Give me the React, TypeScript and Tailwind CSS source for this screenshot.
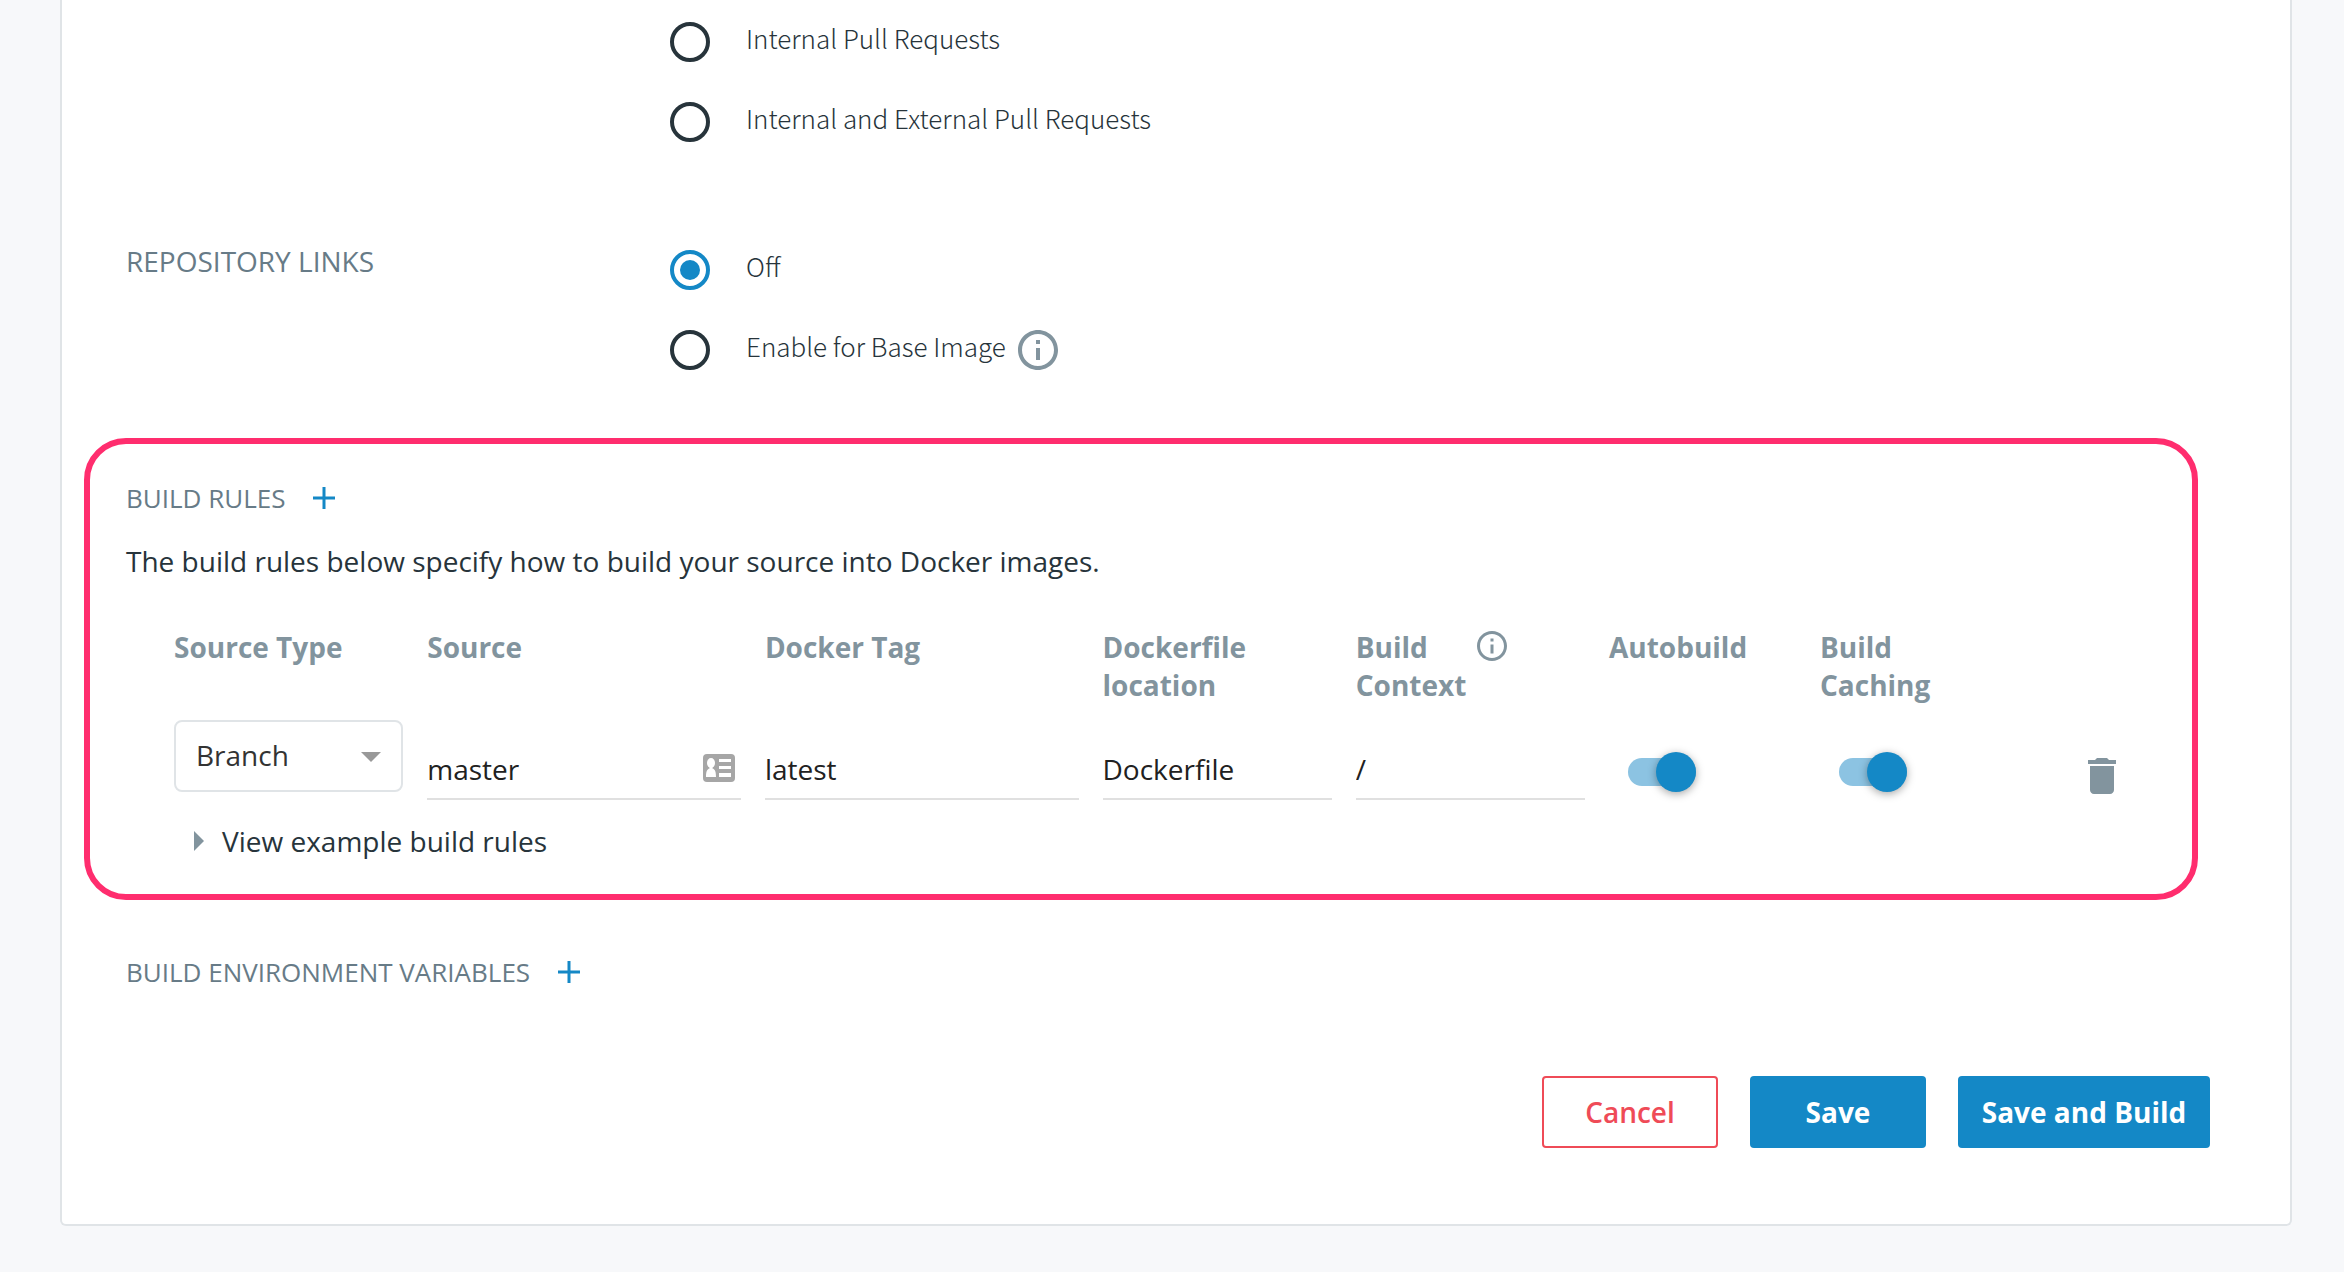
import { useState } from "react";
import type { InputHTMLAttributes, ReactNode } from "react";

const ROW =
  "grid grid-cols-[24fr_32fr_32fr_24fr_24fr_20fr_20fr_9fr] text-left";

function InfoIcon({ className }: { className: string }) {
  return (
    <svg viewBox="0 0 24 24" className={className} fill="currentColor" aria-hidden="true">
      <path d="M11 17h2v-6h-2v6zm1-15C6.480 2 2 6.480 2 12s4.480 10 10 10 10-4.480 10-10S17.520 2 12 2zm0 18c-4.410 0-8-3.590-8-8s3.590-8 8-8 8 3.590 8 8-3.590 8-8 8zM11 9h2V7h-2v2z" />
    </svg>
  );
}

function PlusButton({ label }: { label: string }) {
  return (
    <button type="button" aria-label={label} className="text-[#1488c6]">
      <svg viewBox="0 0 22 22" className="size-[22px]" stroke="currentColor" strokeWidth="3" aria-hidden="true">
        <path d="M11 0v22M0 11h22" />
      </svg>
    </button>
  );
}

function RadioOption({
  name,
  label,
  checked,
  onSelect,
  children,
}: {
  name: string;
  label: string;
  checked: boolean;
  onSelect: () => void;
  children?: ReactNode;
}) {
  return (
    <div className="flex h-10 items-center">
      <label className="flex items-center">
        <input
          type="radio"
          name={name}
          checked={checked}
          onChange={onSelect}
          className="grid size-10 shrink-0 appearance-none place-items-center rounded-full border-4 border-[#27343b] before:size-5 before:rounded-full checked:border-[#1488c6] checked:before:bg-[#1488c6]"
        />
        <span className="pb-2 pl-9 font-['Noto_Sans_CJK_SC','Open_Sans',sans-serif] text-[26px] leading-9 font-light text-[#27343b]">
          {label}
        </span>
      </label>
      {children}
    </div>
  );
}

function TextField(props: InputHTMLAttributes<HTMLInputElement>) {
  return (
    <input
      type="text"
      {...props}
      className="h-[60px] w-full border-b-2 border-[#e0e0e0] bg-transparent text-[28px] text-[#212121] outline-none"
    />
  );
}

function Toggle({ label }: { label: string }) {
  const [on, setOn] = useState(true);
  return (
    <label className="relative mt-8 ml-[19px] flex h-10 w-[68px] items-center">
      <input
        type="checkbox"
        role="switch"
        aria-label={label}
        checked={on}
        onChange={() => setOn(!on)}
        className="peer h-7 w-full appearance-none rounded-full bg-[#bdc5ca] checked:bg-[#8cc3e2]"
      />
      <span className="pointer-events-none absolute left-0 size-10 rounded-full bg-[#f7f8fa] shadow-[0_2px_8px_rgba(0,0,0,0.35)] peer-checked:right-0 peer-checked:left-auto peer-checked:bg-[#1488c6]" />
    </label>
  );
}

export default function App() {
  const [pull, setPull] = useState("");
  const [link, setLink] = useState("Off");

  return (
    <div className="min-h-screen bg-[#f7f8fa] px-[60px] pb-[46px] font-['Open_Sans',sans-serif] text-[28px] leading-[38px] text-[#27343b] md:pr-[52px]">
      <main className="rounded-b-md border-2 border-t-0 border-[#e0e4e7] bg-white pb-[76px]">
        <div role="radiogroup" aria-label="Autotest" className="flex flex-col gap-10 pt-[22px] pl-[608px]">
          {["Internal Pull Requests", "Internal and External Pull Requests"].map((option) => (
            <RadioOption
              key={option}
              name="autotest"
              label={option}
              checked={pull === option}
              onSelect={() => setPull(option)}
            />
          ))}
        </div>

        <section className="flex pt-[108px] pl-16">
          <h2 id="links" className="w-[544px] shrink-0 leading-[22px] text-[#677b87]">
            REPOSITORY LINKS
          </h2>
          <div role="radiogroup" aria-labelledby="links" className="flex flex-col gap-10">
            <RadioOption name="links" label="Off" checked={link === "Off"} onSelect={() => setLink("Off")} />
            <RadioOption
              name="links"
              label="Enable for Base Image"
              checked={link === "Base"}
              onSelect={() => setLink("Base")}
            >
              <button type="button" aria-label="About base image links" className="ml-2 text-[#82949e]">
                <InfoIcon className="size-12" />
              </button>
            </RadioOption>
          </div>
        </section>

        <section className="mt-[68px] mr-[92px] ml-[22px] rounded-[42px] border-6 border-[#ff2d6e] pt-9 pr-[66px] pb-[34px] pl-9">
          <div className="flex items-center gap-7">
            <h2 className="text-[26px] leading-9 text-[#677b87]">BUILD RULES</h2>
            <PlusButton label="Add build rule" />
          </div>
          <p className="mt-[26px]">The build rules below specify how to build your source into Docker images.</p>

          <table className="mt-12 ml-12 block">
            <thead className="block">
              <tr className={`${ROW} text-[#82949e]`}>
                <th scope="col">Source Type</th>
                <th scope="col">Source</th>
                <th scope="col">Docker Tag</th>
                <th scope="col" className="pr-20">Dockerfile location</th>
                <th scope="col" className="flex items-start">
                  <span className="w-[118px]">Build Context</span>
                  <button type="button" aria-label="About build context">
                    <InfoIcon className="size-9" />
                  </button>
                </th>
                <th scope="col">Autobuild</th>
                <th scope="col" className="pr-20">Build Caching</th>
                <td />
              </tr>
            </thead>
            <tbody className="block">
              <tr className={ROW}>
                <td className="relative pt-4 pr-6">
                  <select
                    aria-label="Source Type"
                    className="h-[72px] w-full appearance-none rounded-lg border-2 border-[#e0e4e7] bg-white pb-0.5 pl-5 text-[28px] text-[#333]"
                  >
                    <option>Branch</option>
                    <option>Tag</option>
                  </select>
                  <svg viewBox="0 0 20 10" className="pointer-events-none absolute top-12 right-[46px] h-[10px] w-5 fill-[#999]" aria-hidden="true">
                    <path d="M0 0h20L10 10z" />
                  </svg>
                </td>
                <td className="relative pt-9 pr-6">
                  <TextField aria-label="Source" defaultValue="master" />
                  <svg viewBox="0 0 32 28" className="absolute top-[50px] right-[30px] h-7 w-8" aria-hidden="true">
                    <rect width="32" height="28" rx="4" fill="#a6a6a6" />
                    <g fill="#fff">
                      <ellipse cx="8" cy="9" rx="4" ry="5" />
                      <path d="M6.500 12h3v2.500c2.500.8 3.500 3 3.500 8.500H3c0-5.500 1-7.700 3.500-8.500z" />
                      <path d="M16 5h12v3H16zM16 12h12v3H16zM16 19h12v4H16z" />
                    </g>
                  </svg>
                </td>
                <td className="pt-9 pr-6">
                  <TextField aria-label="Docker Tag" defaultValue="latest" />
                </td>
                <td className="pt-9 pr-6">
                  <TextField aria-label="Dockerfile location" defaultValue="Dockerfile" />
                </td>
                <td className="pt-9 pr-6">
                  <TextField aria-label="Build Context" defaultValue="/" />
                </td>
                <td className="pt-4">
                  <Toggle label="Autobuild" />
                </td>
                <td className="pt-4">
                  <Toggle label="Build Caching" />
                </td>
                <td className="flex justify-end pt-12">
                  <button type="button" aria-label="Delete build rule" className="size-12 text-[#82949e]">
                    <svg viewBox="0 0 24 24" className="size-12" fill="currentColor" aria-hidden="true">
                      <path d="M6 19c0 1.100.9 2 2 2h8c1.100 0 2-.9 2-2V7H6v12zM19 4h-3.500l-1-1h-5l-1 1H5v2h14V4z" />
                    </svg>
                  </button>
                </td>
              </tr>
            </tbody>
          </table>

          <button type="button" className="mt-[22px] ml-[68px] flex items-center gap-[18px]">
            <svg viewBox="0 0 10 20" className="h-5 w-[10px] fill-[#82949e]" aria-hidden="true">
              <path d="M0 0l10 10L0 20z" />
            </svg>
            View example build rules
          </button>
        </section>

        <section className="mt-[54px] flex items-center gap-7 pl-16">
          <h2 className="text-[26px] leading-9 text-[#677b87]">BUILD ENVIRONMENT VARIABLES</h2>
          <PlusButton label="Add environment variable" />
        </section>

        <div className="mt-[86px] mr-20 flex justify-end gap-8">
          <button type="button" className="h-[72px] w-44 rounded border-2 border-[#ef4b57] font-semibold text-[#ef4b57]">
            Cancel
          </button>
          <button type="button" className="h-[72px] w-44 rounded bg-[#1488c6] font-bold text-white">
            Save
          </button>
          <button type="submit" className="h-[72px] w-[252px] rounded bg-[#1488c6] font-bold text-white">
            Save and Build
          </button>
        </div>
      </main>
    </div>
  );
}
